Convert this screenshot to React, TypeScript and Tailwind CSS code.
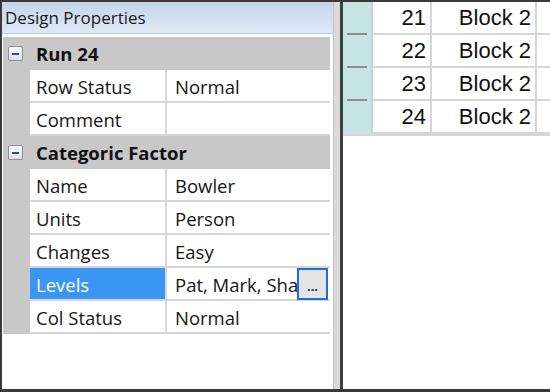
import React from 'react';

type Prop = { name: string; value: string; selected?: boolean; button?: boolean };
type Section = { title: string; props: Prop[] };

const sections: Section[] = [
  {
    title: 'Run 24',
    props: [
      { name: 'Row Status', value: 'Normal' },
      { name: 'Comment', value: '' },
    ],
  },
  {
    title: 'Categoric Factor',
    props: [
      { name: 'Name', value: 'Bowler' },
      { name: 'Units', value: 'Person' },
      { name: 'Changes', value: 'Easy' },
      { name: 'Levels', value: 'Pat, Mark, Shane', selected: true, button: true },
      { name: 'Col Status', value: 'Normal' },
    ],
  },
];

const runs = [21, 22, 23, 24];

const MinusBox = () => (
  <div className="w-[15px] h-[15px] rounded-[2px] border border-[#8e8e8e] bg-gradient-to-b from-white to-[#dedede] flex items-center justify-center">
    <div className="w-[7px] h-[2px] bg-[#2e4f8c]" />
  </div>
);

const CategoryRow = ({ title }: { title: string }) => (
  <div className="h-[33px] flex items-center bg-[#c8c8c8]">
    <div className="w-[33px] pl-[5px] flex items-center">
      <MinusBox />
    </div>
    <span className="font-bold text-[18.5px] text-[#111]">{title}</span>
  </div>
);

const PropRow = ({ p }: { p: Prop }) => (
  <div className="h-[33px] flex text-[18.5px]">
    <div className="w-[27px] bg-[#c8c8c8]" />
    <div
      className={`w-[137px] flex items-center pl-[6px] pt-[2px] border-r-2 border-b-2 border-[#d6d6d6] ${
        p.selected ? 'bg-[#3996f3] text-white' : 'bg-white text-[#161616]'
      }`}
    >
      {p.name}
    </div>
    <div className="flex-1 min-w-0 flex items-center bg-white border-b-2 border-[#d6d6d6] pl-[8px] pr-[2px]">
      <span className="flex-1 min-w-0 pt-[2px] overflow-hidden whitespace-nowrap text-[#161616]">{p.value}</span>
      {p.button && (
        <div className="w-[31px] h-[32px] border-2 border-[#1d6fd8] bg-[#e4e4e4] flex items-end justify-center pb-[5px]">
          <span className="text-[13px] leading-none font-bold text-[#1d2a6e]">...</span>
        </div>
      )}
    </div>
  </div>
);

export default function App() {
  return (
    <div className="w-[550px] h-[392px] flex overflow-hidden bg-white border-t-2 border-l-2 border-b-[3px] border-[#3a3a3a]">
      {/* properties panel */}
      <div className="w-[331px] flex flex-col bg-white text-[17px]" style={{ fontFamily: '"Open Sans", "Noto Sans", sans-serif' }}>
        <div className="h-[32px] shrink-0 flex items-center pl-[3px] bg-gradient-to-b from-[#c6d5e8] to-[#dee9f6] border-b border-[#c9ced6] text-[#1a1a1a]">
          Design Properties
        </div>
        <div className="mt-[3px] ml-[1px] w-[327px] flex flex-col">
          {sections.map((s) => (
            <React.Fragment key={s.title}>
              <CategoryRow title={s.title} />
              {s.props.map((p) => (
                <PropRow key={p.name} p={p} />
              ))}
            </React.Fragment>
          ))}
        </div>
      </div>

      {/* splitter */}
      <div className="w-[7px] bg-[#dadada] border-l border-[#c2c2c2]" />
      <div className="w-[3px] bg-[#404040]" />

      {/* design table */}
      <div className="flex-1 flex flex-col text-[22px] text-[#111]" style={{ fontFamily: '"Liberation Sans", Arial, sans-serif' }}>
        {runs.map((r, i) => (
          <div key={r} className="h-[33px] flex">
            <div className="w-[30px] relative bg-[#c6e5e2] border-r-2 border-[#cfcfcf]">
              {i < runs.length - 1 && (
                <div className="absolute left-[4px] right-[4px] bottom-0 h-[2px] bg-[#8c8c8c]" />
              )}
            </div>
            <div className="w-[59px] flex items-center justify-end pr-[4px] border-r-2 border-b-2 border-[#d6d6d6]">
              {r}
            </div>
            <div className="w-[105px] flex items-center justify-end pr-[4px] border-r-2 border-b-2 border-[#d6d6d6]">
              Block 2
            </div>
            <div className="flex-1 border-b-2 border-[#d6d6d6]" />
          </div>
        ))}
        <div className="h-[2px] bg-[#d6d6d6]" />
      </div>
    </div>
  );
}
